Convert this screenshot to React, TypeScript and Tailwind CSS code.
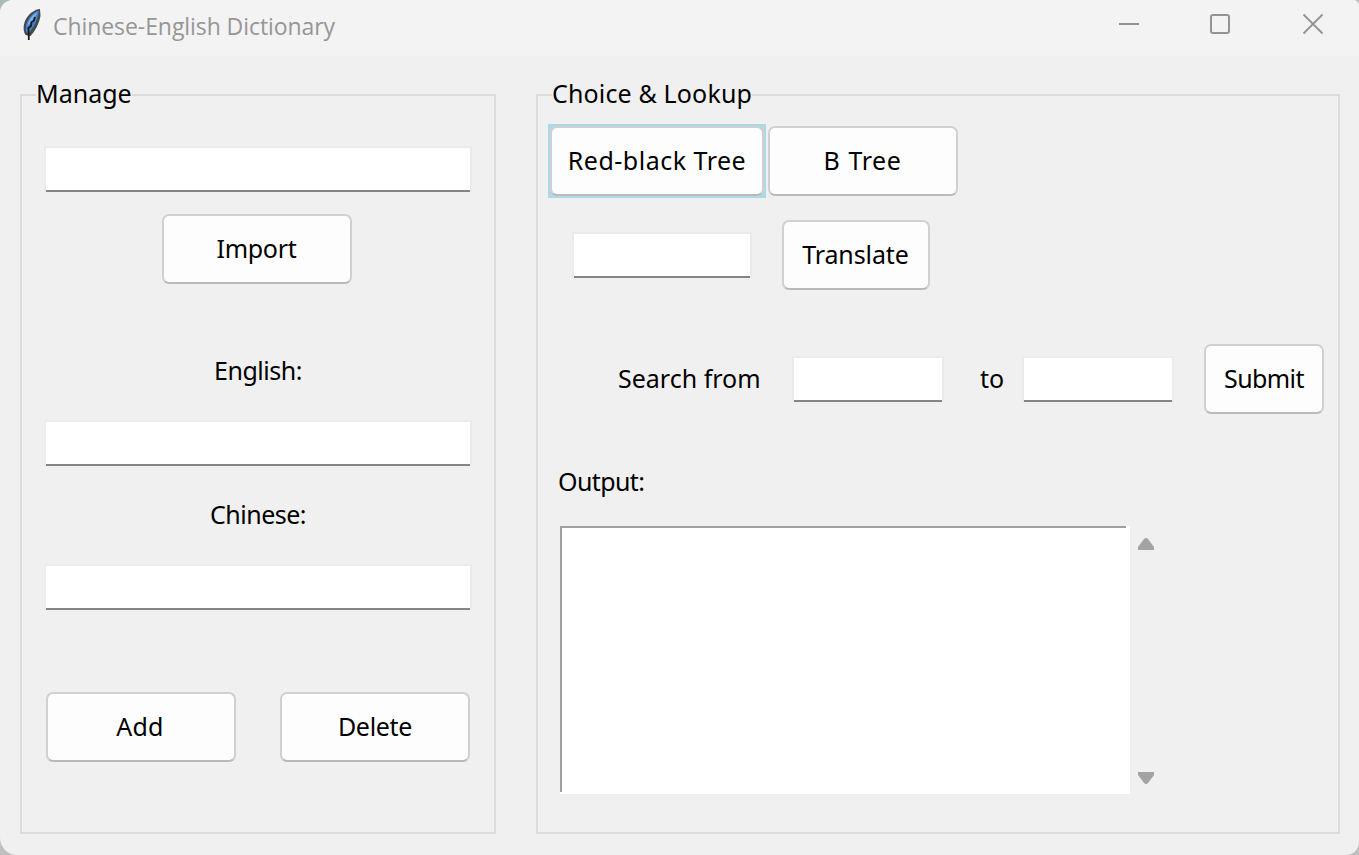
import type { ReactNode } from "react";

const uiFont = "font-['Noto_Sans','Open_Sans',sans-serif] text-[25px] leading-[34px] text-black whitespace-nowrap";

function Button({ children, className = "" }: { children: ReactNode; className?: string }) {
  return (
    <button
      className={`flex h-[70px] shrink-0 items-center justify-center rounded-[7px] border-2 border-[#d0d0d0] border-b-[#bababa] bg-[#fdfdfd] pb-[2px] ${uiFont} ${className}`}
    >
      {children}
    </button>
  );
}

function Entry({ className = "", label }: { className?: string; label: string }) {
  return (
    <div className={`h-[46px] shrink-0 border-x-2 border-t-2 border-[#ebebeb] ${className}`}>
      <input
        aria-label={label}
        className="block h-[44px] w-full border-b-2 border-[#858585] bg-white outline-none"
      />
    </div>
  );
}

function Group({
  title,
  titleClass = "",
  className = "",
  children,
}: {
  title: string;
  titleClass?: string;
  className?: string;
  children: ReactNode;
}) {
  return (
    <section className={`relative h-[740px] shrink-0 border-2 border-[#dcdcdc] ${className}`}>
      <h2 className={`absolute left-[14px] top-[-20px] bg-[#f0f0f0] ${uiFont} ${titleClass}`}>{title}</h2>
      {children}
    </section>
  );
}

function Feather() {
  return (
    <svg width="20" height="34" viewBox="0 0 20 34" className="shrink-0">
      <path d="M18 1C12.500 1.500 6 6 3 13C1.200 18 1 23 3.500 27L8.500 28C13 23 17 16 18.500 8Z" fill="#45484d" />
      <path d="M17 2.500C11 4.500 6 10 4 17L3.500 23L6 25.500C12 20 16 11 17 2.500Z" fill="#4480c8" />
      <path d="M15.500 3.500C10.500 7 6.500 12 5 18C9 15 13.500 9 15.500 3.500Z" fill="#78b4f0" />
      <path d="M13 9L11.500 13L9.500 14L9 18L6.500 20L6.800 32" fill="none" stroke="#17191c" strokeWidth="1.800" />
    </svg>
  );
}

export default function App() {
  return (
    <div className="h-[855px] w-[1359px] overflow-hidden bg-linear-to-br from-[#a9bcb1] from-5% to-[#bfbfbf] to-20%">
      <main className="h-[855px] overflow-hidden rounded-tl-[13px] rounded-tr-[6px] rounded-br-[13px] rounded-bl-[17px] bg-[#f0f0f0]">
        <header className="flex h-[56px] justify-between bg-[#f3f3f3]">
          <div className="flex pl-[22px] pt-[8px]">
            <Feather />
            <h1 className="pl-[11px] font-['Open_Sans','Noto_Sans',sans-serif] text-[23px] leading-[37px] tracking-[-0.07px] whitespace-nowrap text-[#969696]">
              Chinese-English Dictionary
            </h1>
          </div>
          <div className="flex pt-[13px] pr-[35px]">
            <svg className="mr-[69px]" width="22" height="22" viewBox="0 0 22 22" stroke="#939393" strokeWidth="2" fill="none"><path d="M1 11H21" /></svg>
            <svg className="mr-[71px]" width="22" height="22" viewBox="0 0 22 22" stroke="#939393" strokeWidth="2" fill="none"><rect x="2" y="2" width="18" height="18" rx="2" /></svg>
            <svg width="22" height="22" viewBox="0 0 22 22" stroke="#939393" strokeWidth="1.800" fill="none"><path d="M1.500 1.500L20.500 20.500M20.500 1.500L1.500 20.500" /></svg>
          </div>
        </header>

        <div className="flex gap-[40px] pl-[20px] pt-[38px]">
          <Group title="Manage" className="w-[476px]">
            <div className="flex flex-col items-center px-[22px] pt-[50px]">
              <Entry label="File" className="w-full" />
              <Button className="mt-[22px] w-[190px] -translate-x-px pr-px tracking-[-0.3px]">Import</Button>
              <span className={`mt-[69px] tracking-[-0.5px] ${uiFont}`}>English:</span>
              <Entry label="English" className="mt-[33px] w-full" />
              <span className={`mt-[31px] tracking-[-0.5px] ${uiFont}`}>Chinese:</span>
              <Entry label="Chinese" className="mt-[33px] w-full" />
              <div className="mt-[82px] flex w-full justify-between px-[2px]">
                <Button className="w-[190px] pr-[2px] tracking-[0.3px]">Add</Button>
                <Button className="w-[190px] tracking-[-0.3px]">Delete</Button>
              </div>
            </div>
          </Group>

          <Group title="Choice & Lookup" titleClass="tracking-[0.15px]" className="w-[804px]">
            <div className="flex gap-[2px] pl-[10px] pt-[28px]">
              <div className="bg-[#add8e6] p-[2px]">
                <Button className="w-[214px] tracking-[0.5px]">Red-black Tree</Button>
              </div>
              <Button className="mt-[2px] w-[190px] pr-px tracking-[0.6px] [word-spacing:1px]">B Tree</Button>
            </div>
            <div className="flex items-center gap-[30px] pl-[34px] pt-[22px]">
              <Entry label="Word" className="w-[180px]" />
              <Button className="w-[148px] pr-px tracking-[-0.1px]">Translate</Button>
            </div>
            <div className="flex items-center pl-[80px] pt-[54px]">
              <span className={`w-[174px] pb-[2px] ${uiFont}`}>Search from</span>
              <Entry label="Range start" className="w-[152px]" />
              <span className={`w-[78px] pb-[2px] pl-[36px] ${uiFont}`}>to</span>
              <Entry label="Range end" className="w-[152px]" />
              <Button className="ml-[30px] w-[120px] tracking-[-0.6px]">Submit</Button>
            </div>
            <div className={`pl-[20px] pt-[50px] tracking-[-0.6px] ${uiFont}`}>Output:</div>
            <div className="flex gap-[8px] pl-[22px] pt-[28px]">
              <div className="h-[268px] w-[570px] bg-white">
                <div className="h-[266px] w-[566px] border-l-2 border-t-2 border-[#a0a0a0]" />
              </div>
              <div className="flex flex-col justify-between pb-[10px] pt-[12px]">
                <svg width="16" height="12" viewBox="0 0 16 12" fill="#a3a3a3"><path d="M0 12V9L6 1Q8-1 10 1L16 9V12Z" /></svg>
                <svg width="16" height="12" viewBox="0 0 16 12" fill="#a3a3a3"><path d="M0 0V3L6 11Q8 13 10 11L16 3V0Z" /></svg>
              </div>
            </div>
          </Group>
        </div>
      </main>
    </div>
  );
}
